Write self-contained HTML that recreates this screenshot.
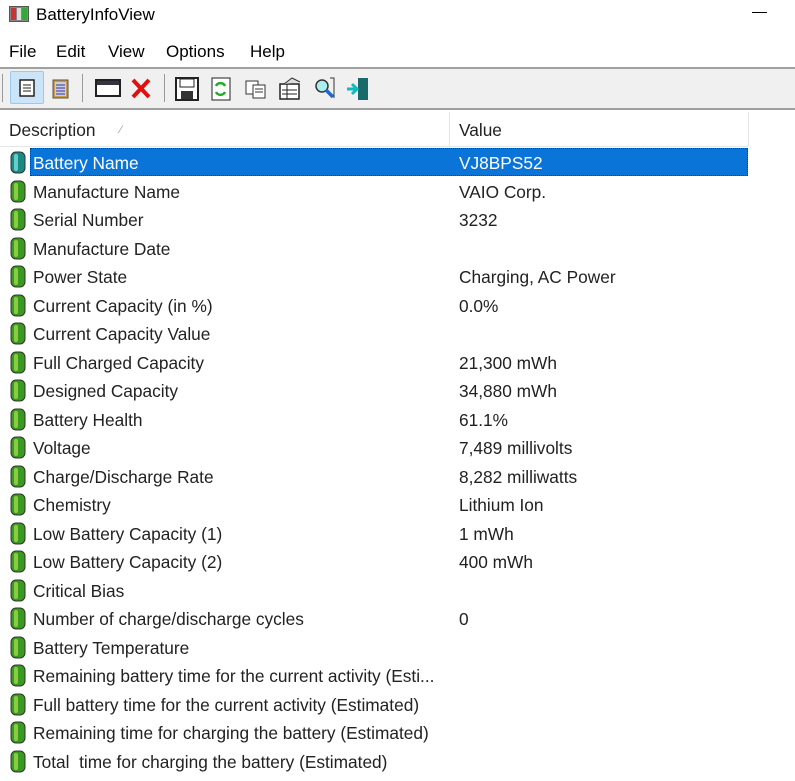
<!DOCTYPE html>
<html><head><meta charset="utf-8"><style>
body{margin:0;width:795px;height:781px;background:#fff;font-family:"Liberation Sans",sans-serif;position:relative;overflow:hidden;color:#000}
.a{position:absolute}
.t{font-size:17px;white-space:nowrap}
.row{position:absolute;left:0;height:28px;width:795px}
.row .d{position:absolute;left:33px;top:5px;font-size:17.3px;color:#222;white-space:nowrap}
.row .v{position:absolute;left:459px;top:5px;font-size:17.3px;color:#222;white-space:nowrap}
.row svg{position:absolute;left:10px;top:3px}
</style></head><body>
<svg class="a" style="left:9px;top:6px" width="20" height="16"><rect x="0.5" y="0.5" width="19" height="15" fill="#888" stroke="#555"/><rect x="2" y="2" width="5" height="12" fill="#c33"/><rect x="8" y="2" width="4" height="12" fill="#ddd"/><rect x="13" y="2" width="5" height="12" fill="#3a3"/></svg>
<div class="a t" style="left:36px;top:5px;font-size:17px">BatteryInfoView</div>
<div class="a" style="left:752px;top:12px;width:15px;height:1px;background:#000"></div>
<div class="a t" style="left:9px;top:42px">File</div>
<div class="a t" style="left:56px;top:42px">Edit</div>
<div class="a t" style="left:108px;top:42px">View</div>
<div class="a t" style="left:166px;top:42px">Options</div>
<div class="a t" style="left:250px;top:42px">Help</div>
<div class="a" style="left:0;top:67px;width:795px;height:43px;background:#f0f0f0;border-top:2px solid #a0a0a0;border-bottom:2px solid #a0a0a0;box-sizing:border-box"></div>
<div class="a" style="left:10px;top:71px;width:34px;height:33px;background:#cce4f7;border:1px solid #99c9ef;box-sizing:border-box;border-radius:2px"></div>
<div class="a" style="left:2px;top:74px;width:1px;height:28px;background:#999"></div>
<div class="a" style="left:82px;top:74px;width:1px;height:28px;background:#999"></div>
<div class="a" style="left:164px;top:74px;width:1px;height:28px;background:#999"></div>
<svg class="a" style="left:0;top:70px" width="380" height="38">
<rect x="20" y="10" width="14" height="16" fill="#fff" stroke="#222" stroke-width="1.5"/><path d="M23 15h8M23 18h8M23 21h8" stroke="#222"/>
<rect x="53" y="10" width="15" height="18" fill="#c89a4a" stroke="#554"/><rect x="55" y="12" width="11" height="14" fill="#ccd"/><path d="M56 15h9M56 18h9M56 21h9M56 24h9" stroke="#33a"/>
<rect x="96" y="10" width="24" height="16" fill="#fff" stroke="#222" stroke-width="2"/><rect x="97" y="11" width="22" height="4" fill="#334"/>
<path d="M133 10l16 17M149 10l-16 17" stroke="#e01010" stroke-width="4"/>
<rect x="176" y="8" width="22" height="22" fill="#fff" stroke="#222" stroke-width="2"/><rect x="180" y="9" width="14" height="8" fill="#fff" stroke="#222"/><rect x="181" y="21" width="12" height="8" fill="#333"/>
<rect x="212" y="8" width="18" height="22" fill="#fff" stroke="#222"/><path d="M216 16a5 5 0 0 1 9 0M225 22a5 5 0 0 1-9 0" stroke="#2a2" stroke-width="2.5" fill="none"/>
<rect x="246" y="11" width="12" height="13" fill="#fff" stroke="#333"/><rect x="253" y="15" width="12" height="13" fill="#fff" stroke="#333"/><path d="M255 19h8M255 22h8" stroke="#333"/>
<rect x="280" y="14" width="19" height="15" fill="#fff" stroke="#222" stroke-width="1.5"/><path d="M282 20h15M282 24h15M287 14v15" stroke="#222"/><path d="M284 14l8-6 8 4" stroke="#333" fill="#ddd"/>
<circle cx="322" cy="16" r="6" fill="#aee" stroke="#333" stroke-width="1.5"/><path d="M326 20l7 7" stroke="#26c" stroke-width="3.5"/><path d="M330 8h4v20" stroke="#333" fill="none"/>
<rect x="358" y="8" width="10" height="22" fill="#1a6a6a"/><path d="M347 19h9M352 14l5 5-5 5" stroke="#1bb" stroke-width="3" fill="none"/>
</svg>
<div class="a" style="left:0;top:112px;width:748px;height:34px;border-bottom:1px solid #e5e5e5"></div>
<div class="a" style="left:449px;top:112px;width:1px;height:34px;background:#e5e5e5"></div>
<div class="a" style="left:748px;top:112px;width:1px;height:34px;background:#e5e5e5"></div>
<div class="a t" style="left:9px;top:120px;font-size:17.3px;color:#222">Description</div>
<div class="a" style="left:120px;top:124px;font-size:11px;color:#999">⁄</div>
<div class="a t" style="left:459px;top:120px;font-size:17.3px;color:#222">Value</div>
<div class="a" style="left:30px;top:148px;width:718px;height:28px;background:#0a74d8;border:1px dotted #333;box-sizing:border-box"></div>
<div id="rows"></div>
<script>
var r=[["Battery Name","VJ8BPS52"],["Manufacture Name","VAIO Corp."],["Serial Number","3232"],["Manufacture Date",""],["Power State","Charging, AC Power"],["Current Capacity (in %)","0.0%"],["Current Capacity Value",""],["Full Charged Capacity","21,300 mWh"],["Designed Capacity","34,880 mWh"],["Battery Health","61.1%"],["Voltage","7,489 millivolts"],["Charge/Discharge Rate","8,282 milliwatts"],["Chemistry","Lithium Ion"],["Low Battery Capacity (1)","1 mWh"],["Low Battery Capacity (2)","400 mWh"],["Critical Bias",""],["Number of charge/discharge cycles","0"],["Battery Temperature",""],["Remaining battery time for the current activity (Esti...",""],["Full battery time for the current activity (Estimated)",""],["Remaining time for charging the battery (Estimated)",""],["Total &nbsp;time for charging the battery (Estimated)",""]];
var h="";r.forEach(function(x,i){var y=148+i*28.52;var sel=i==0;var c=sel?"#1a8a80":"#3a9a20",c2=sel?"#6cc":"#8c4";
h+='<div class="row" style="top:'+y+'px"><svg width="16" height="23"><rect x="1" y="1" width="14" height="21" rx="5" fill="'+c+'" stroke="#333"/><rect x="4" y="3" width="4" height="17" rx="2" fill="'+c2+'"/></svg><div class="d"'+(sel?' style="color:#fff"':'')+'>'+x[0]+'</div><div class="v"'+(sel?' style="color:#fff"':'')+'>'+x[1]+'</div></div>';});
document.getElementById("rows").innerHTML=h;
</script>
</body></html>
